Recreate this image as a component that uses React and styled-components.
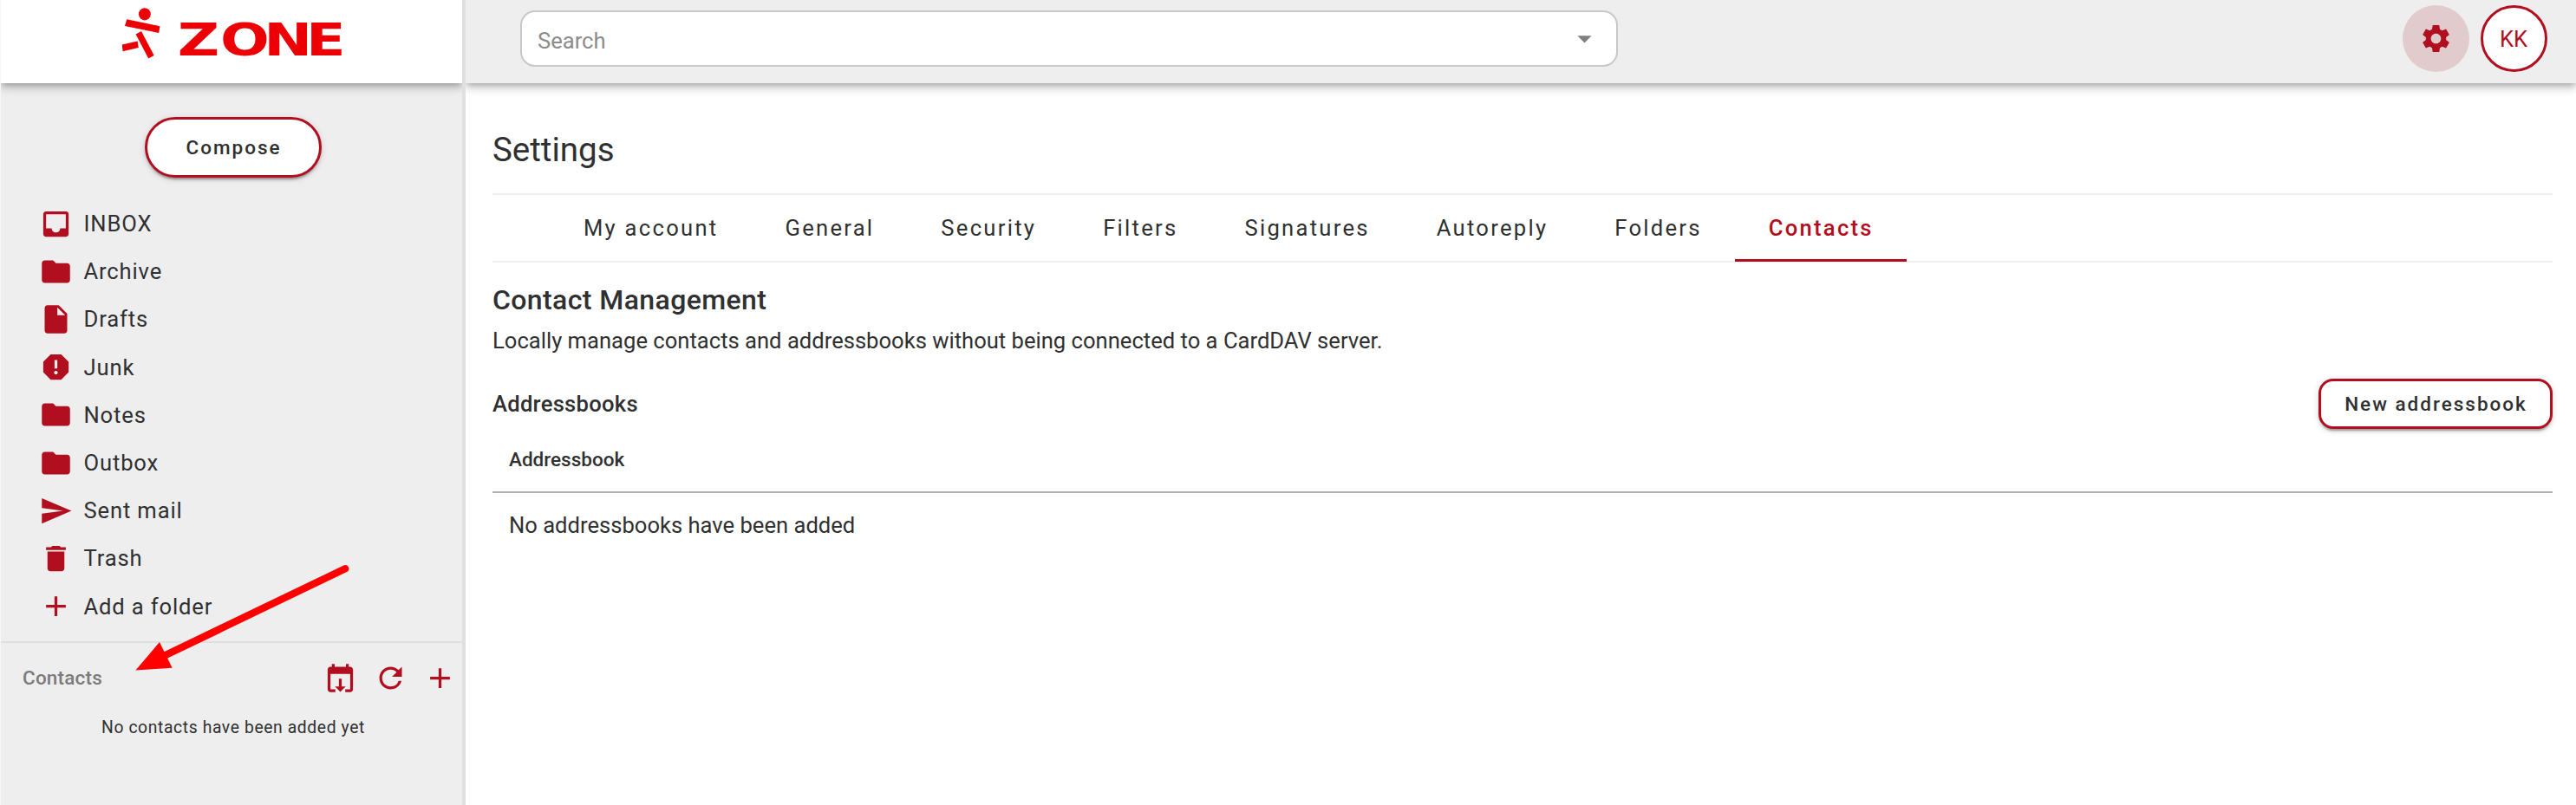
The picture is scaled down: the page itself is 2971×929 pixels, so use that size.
import React, { useState } from 'react';
import styled, { createGlobalStyle } from 'styled-components';
import {
  MdAdd,
  MdArrowDropDown,
  MdDelete,
  MdFolder,
  MdInbox,
  MdInsertDriveFile,
  MdRefresh,
  MdReport,
  MdSend,
  MdSettings,
} from 'react-icons/md';

const folders = [
  { name: 'INBOX', Icon: MdInbox },
  { name: 'Archive', Icon: MdFolder },
  { name: 'Drafts', Icon: MdInsertDriveFile },
  { name: 'Junk', Icon: MdReport },
  { name: 'Notes', Icon: MdFolder },
  { name: 'Outbox', Icon: MdFolder },
  { name: 'Sent mail', Icon: MdSend },
  { name: 'Trash', Icon: MdDelete },
  { name: 'Add a folder', Icon: MdAdd },
];

const tabs = [
  'My account',
  'General',
  'Security',
  'Filters',
  'Signatures',
  'Autoreply',
  'Folders',
  'Contacts',
];

const Logo = () => (
  <svg width="270" height="76" viewBox="140 8 270 76" fill="#ec0006">
    <ellipse cx="166.9" cy="16.3" rx="6.9" ry="7.1" />
    <polygon points="146.3,22.2 184.4,30.2 183.2,37.9 144,30" />
    <polygon points="156.6,39.4 163,36.1 177.7,64 171.2,67.5" />
    <polygon points="140.8,51.5 158.6,47.5 159.8,55.1 141.6,59.2" />
    <text
      transform="translate(0 64.4) scale(1.3 1)"
      x="157.6 195.4 234 271.6"
      y="0"
      fontFamily="DejaVu Sans"
      fontWeight="700"
      fontSize="51.4"
    >
      ZONE
    </text>
  </svg>
);

const CalendarImport = () => (
  <svg width="39" height="39" viewBox="0 0 24 24" fill="currentColor">
    <path d="M5 22H8.5V20H5V9H19V20H15.5V22H19C20.1 22 21 21.1 21 20V6C21 4.9 20.1 4 19 4H18V2H16V4H8V2H6V4H5C3.9 4 3 4.9 3 6V20C3 21.1 3.9 22 5 22ZM11 12.5V18H8.2L12 21.8L15.8 18H13V12.5Z" />
  </svg>
);

const App = () => {
  const [activeTab, setActiveTab] = useState('Contacts');

  return (
    <>
      <GlobalStyle />
      <Layout>
        <Sidebar>
          <Brand>
            <Logo />
          </Brand>
          <ComposeButton type="button">Compose</ComposeButton>
          <FolderList>
            {folders.map(({ name, Icon }) => (
              <Folder key={name}>
                <Icon />
                {name}
              </Folder>
            ))}
          </FolderList>
          <ContactsPanel>
            <header>
              <h2>Contacts</h2>
              <IconButton type="button" aria-label="Import">
                <CalendarImport />
              </IconButton>
              <IconButton type="button" aria-label="Refresh">
                <MdRefresh />
              </IconButton>
              <IconButton type="button" aria-label="Add">
                <MdAdd />
              </IconButton>
            </header>
            <p>No contacts have been added yet</p>
          </ContactsPanel>
        </Sidebar>

        <Main>
          <TopBar>
            <SearchBox>
              <input type="text" placeholder="Search" />
              <MdArrowDropDown />
            </SearchBox>
            <RoundButton type="button" $filled aria-label="Settings">
              <MdSettings />
            </RoundButton>
            <RoundButton type="button">KK</RoundButton>
          </TopBar>

          <Content>
            <h1>Settings</h1>
            <Tabs>
              {tabs.map(tab => (
                <Tab
                  key={tab}
                  type="button"
                  $active={tab === activeTab}
                  onClick={() => setActiveTab(tab)}
                >
                  {tab}
                </Tab>
              ))}
            </Tabs>
            <SectionTitle>Contact Management</SectionTitle>
            <Lead>
              Locally manage contacts and addressbooks without being connected
              to a CardDAV server.
            </Lead>
            <ListHeader>
              <h3>Addressbooks</h3>
              <NewButton type="button">New addressbook</NewButton>
            </ListHeader>
            <Table>
              <thead>
                <tr>
                  <th>Addressbook</th>
                </tr>
              </thead>
              <tbody>
                <tr>
                  <td>No addressbooks have been added</td>
                </tr>
              </tbody>
            </Table>
          </Content>
        </Main>

        {/* Pointer towards the contacts panel */}
        <Pointer width="260" height="130" viewBox="150 650 260 130">
          <path
            d="M398.2 656.3L190 756.5"
            stroke="#f00"
            strokeWidth="8.4"
            strokeLinecap="round"
          />
          <polygon points="156.4,773.6 184,741 198.6,770.7" fill="#f00" />
        </Pointer>
      </Layout>
    </>
  );
};

const GlobalStyle = createGlobalStyle`
  * {
    box-sizing: border-box;
    margin: 0;
    padding: 0;
  }
  body {
    background: #fff;
    color: #2f3031;
    font-family: Roboto, sans-serif;
    font-size: 25.6px;
  }
  button,
  input {
    font-family: inherit;
    font-size: inherit;
    color: inherit;
  }
  button {
    border: none;
    background: transparent;
    cursor: pointer;
  }
  svg {
    display: block;
    flex-shrink: 0;
  }
`;

const Layout = styled.div`
  position: relative;
  display: flex;
  height: 929px;
  overflow: hidden;
`;

const Sidebar = styled.aside`
  display: flex;
  flex-direction: column;
  width: 537px;
  flex-shrink: 0;
  overflow: hidden;
  background: #eee;
  border-left: 1px solid #f7f7f7;
  border-right: 4px solid #e0e0e0;
`;

const barShadow = `
  box-shadow: 0 3px 6px -1.6px rgba(0, 0, 0, 0.2),
    0 6px 8px rgba(0, 0, 0, 0.14), 0 1.6px 16px rgba(0, 0, 0, 0.12);
`;

const Brand = styled.div`
  height: 96px;
  flex-shrink: 0;
  padding: 8px 0 0 139px;
  background: #fff;
  ${barShadow}
`;

const OutlinedButton = styled.button`
  border: 3px solid #b10f20;
  background: #fff;
  font-size: 22.5px;
  font-weight: 500;
  letter-spacing: 2px;
  text-indent: 2px;
  box-shadow: 0 5px 1.6px -3px rgba(0, 0, 0, 0.2),
    0 3px 3px rgba(0, 0, 0, 0.14), 0 1.6px 8px rgba(0, 0, 0, 0.12);
`;

const ComposeButton = styled(OutlinedButton)`
  align-self: center;
  flex-shrink: 0;
  width: 204px;
  height: 70px;
  margin: 38.5px 0 26px 3px;
  border-radius: 35px;
`;

const FolderList = styled.ul`
  list-style: none;
  flex-shrink: 0;
`;

const Folder = styled.li`
  display: flex;
  align-items: center;
  gap: 12.5px;
  height: 55.2px;
  padding-left: 44px;
  letter-spacing: 0.85px;
  svg {
    font-size: 39px;
    color: #b10f20;
  }
`;

const ContactsPanel = styled.section`
  margin-top: 13px;
  border-top: 2px solid #dfdfdf;
  header {
    display: flex;
    align-items: center;
    height: 80px;
    padding: 0 6px 0 25px;
  }
  h2 {
    flex: 1;
    font-size: 22.5px;
    font-weight: 500;
    letter-spacing: 0.2px;
    color: #7b7b7b;
  }
  p {
    padding: 5px 0 0 4px;
    font-size: 19.3px;
    line-height: 26px;
    letter-spacing: 0.62px;
    text-align: center;
  }
`;

const IconButton = styled.button`
  margin-left: 18.5px;
  color: #b10f20;
  svg {
    font-size: 39px;
  }
`;

const Main = styled.main`
  flex: 1;
  overflow: hidden;
`;

const TopBar = styled.header`
  display: flex;
  align-items: center;
  height: 96px;
  padding: 0 33.5px 7px 63px;
  background: #eee;
  ${barShadow}
`;

const SearchBox = styled.div`
  display: flex;
  align-items: center;
  width: 1266px;
  height: 65px;
  margin-right: auto;
  padding: 0 17px 0 18px;
  border: 2px solid #c8c8c8;
  border-radius: 17px;
  background: #fff;
  input {
    flex: 1;
    padding-top: 4px;
    border: none;
    outline: none;
  }
  input::placeholder {
    color: #8c8c8c;
    opacity: 1;
  }
  svg {
    font-size: 39px;
    color: #7f7f7f;
  }
`;

const RoundButton = styled.button`
  display: flex;
  align-items: center;
  justify-content: center;
  width: 77px;
  height: 77px;
  margin-left: 13px;
  border: ${({ $filled }) => ($filled ? 'none' : '3px solid #b10f20')};
  border-radius: 50%;
  background: ${({ $filled }) => ($filled ? '#e2cbcd' : '#fff')};
  color: #b10f20;
  svg {
    font-size: 39px;
  }
`;

const Content = styled.div`
  padding: 54px 27.5px 0 31px;
  h1 {
    font-size: 38.5px;
    font-weight: 400;
    line-height: 46px;
  }
`;

const Tabs = styled.nav`
  display: flex;
  height: 80px;
  margin-top: 27px;
  padding-left: 66.5px;
  border-top: 2px solid #efefef;
  border-bottom: 2px solid #efefef;
`;

const Tab = styled.button`
  height: 77px;
  padding: 0 38.5px 1px;
  border-top: 2px solid transparent;
  border-bottom: 3px solid
    ${({ $active }) => ($active ? '#b10f20' : 'transparent')};
  letter-spacing: 2.27px;
  font-weight: ${({ $active }) => ($active ? 500 : 400)};
  color: ${({ $active }) => ($active ? '#b10f20' : 'inherit')};
`;

const SectionTitle = styled.h2`
  margin-top: 23px;
  font-size: 32px;
  font-weight: 500;
  line-height: 40px;
  letter-spacing: 0.4px;
`;

const Lead = styled.p`
  margin-top: 7px;
  line-height: 40px;
`;

const ListHeader = styled.div`
  display: flex;
  align-items: center;
  justify-content: space-between;
  margin-top: 24px;
  h3 {
    font-size: 25.6px;
    font-weight: 500;
    letter-spacing: 0.27px;
  }
`;

const NewButton = styled(OutlinedButton)`
  width: 270px;
  height: 58px;
  border-radius: 17px;
`;

const Table = styled.table`
  width: 100%;
  border-collapse: collapse;
  text-align: left;
  th {
    height: 73px;
    padding: 0 19px 2px;
    border-bottom: 2px solid #b2b2b2;
    font-size: 22.5px;
    font-weight: 500;
  }
  td {
    height: 76px;
    padding: 0 19px 2px;
  }
`;

const Pointer = styled.svg`
  position: absolute;
  left: 150px;
  top: 650px;
`;

export default App;
